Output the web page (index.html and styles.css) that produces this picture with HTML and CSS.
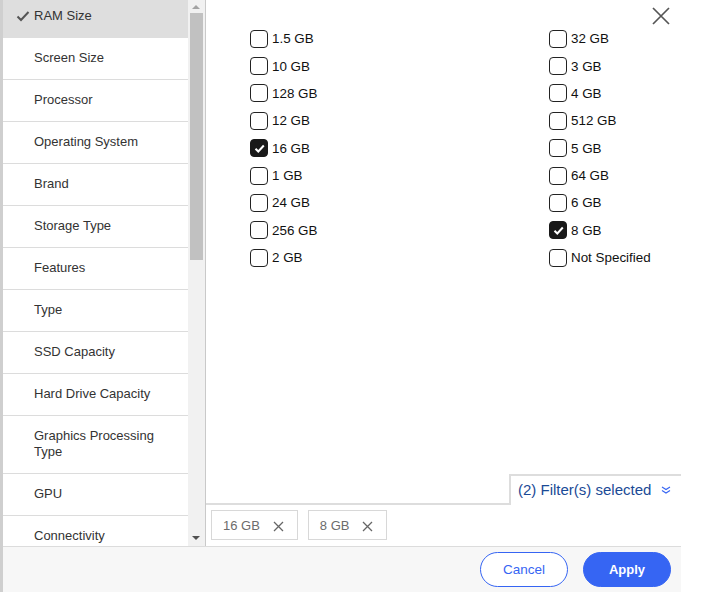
FILE: index.html
```html
<!DOCTYPE html>
<html lang="en">
<head>
<meta charset="utf-8">
<title>Filters</title>
<link rel="stylesheet" href="styles.css">
</head>
<body>
<div class="page">
  <div class="backdrop"></div>
  <div class="modal">
    <div class="main">
      <div class="sidebar">
        <div class="list-wrap">
          <ul class="list">
            <li class="row selected"><span class="icon"><svg width="14" height="14" viewBox="0 0 14 14"><path d="M1.5 7.5 L5 11 L12.5 3" fill="none" stroke="#555" stroke-width="2"/></svg></span><span class="label">RAM Size</span></li>
            <li class="row"><span class="icon"></span><span class="label">Screen Size</span></li>
            <li class="row"><span class="icon"></span><span class="label">Processor</span></li>
            <li class="row"><span class="icon"></span><span class="label">Operating System</span></li>
            <li class="row"><span class="icon"></span><span class="label">Brand</span></li>
            <li class="row"><span class="icon"></span><span class="label">Storage Type</span></li>
            <li class="row"><span class="icon"></span><span class="label">Features</span></li>
            <li class="row"><span class="icon"></span><span class="label">Type</span></li>
            <li class="row"><span class="icon"></span><span class="label">SSD Capacity</span></li>
            <li class="row"><span class="icon"></span><span class="label">Hard Drive Capacity</span></li>
            <li class="row"><span class="icon"></span><span class="label">Graphics Processing Type</span></li>
            <li class="row"><span class="icon"></span><span class="label">GPU</span></li>
            <li class="row"><span class="icon"></span><span class="label">Connectivity</span></li>
          </ul>
        </div>
        <div class="scrollbar">
          <div class="sb-btn"><span class="tri-up"></span></div>
          <div class="sb-thumb"></div>
          <div class="sb-space"></div>
          <div class="sb-btn sb-down"><span class="tri-down"></span></div>
        </div>
      </div>
      <div class="pane">
        <div class="options">
          <button class="close" aria-label="Close"><svg width="20" height="20" viewBox="0 0 20 20"><path d="M2 2 L18 18 M18 2 L2 18" stroke="#555" stroke-width="1.7" fill="none"/></svg></button>
          <div class="grid">
            <label class="opt"><span class="box"></span>1.5 GB</label>
            <label class="opt"><span class="box"></span>10 GB</label>
            <label class="opt"><span class="box"></span>128 GB</label>
            <label class="opt"><span class="box"></span>12 GB</label>
            <label class="opt"><span class="box checked"><svg width="13" height="13" viewBox="0 0 13 13"><path d="M2.5 6.8 L5.3 9.5 L10.8 3.5" fill="none" stroke="#fff" stroke-width="2"/></svg></span>16 GB</label>
            <label class="opt"><span class="box"></span>1 GB</label>
            <label class="opt"><span class="box"></span>24 GB</label>
            <label class="opt"><span class="box"></span>256 GB</label>
            <label class="opt"><span class="box"></span>2 GB</label>
            <label class="opt"><span class="box"></span>32 GB</label>
            <label class="opt"><span class="box"></span>3 GB</label>
            <label class="opt"><span class="box"></span>4 GB</label>
            <label class="opt"><span class="box"></span>512 GB</label>
            <label class="opt"><span class="box"></span>5 GB</label>
            <label class="opt"><span class="box"></span>64 GB</label>
            <label class="opt"><span class="box"></span>6 GB</label>
            <label class="opt"><span class="box checked"><svg width="13" height="13" viewBox="0 0 13 13"><path d="M2.5 6.8 L5.3 9.5 L10.8 3.5" fill="none" stroke="#fff" stroke-width="2"/></svg></span>8 GB</label>
            <label class="opt"><span class="box"></span>Not Specified</label>
          </div>
        </div>
        <div class="selbar">
          <div class="selbar-fill"></div>
          <div class="seltab">(2) Filter(s) selected <svg class="chev" width="10" height="8" viewBox="0 0 10 8"><path d="M1 1 L5 3.5 L9 1 M1 4.5 L5 7 L9 4.5" fill="none" stroke="#3665f3" stroke-width="1.1"/></svg></div>
        </div>
        <div class="chips">
          <span class="chip">16 GB <svg width="11" height="11" viewBox="0 0 11 11"><path d="M1 1 L10 10 M10 1 L1 10" stroke="#666" stroke-width="1.3"/></svg></span>
          <span class="chip">8 GB <svg width="11" height="11" viewBox="0 0 11 11"><path d="M1 1 L10 10 M10 1 L1 10" stroke="#666" stroke-width="1.3"/></svg></span>
        </div>
      </div>
    </div>
    <div class="footer">
      <button class="btn btn-cancel">Cancel</button>
      <button class="btn btn-apply">Apply</button>
    </div>
  </div>
</div>
</body>
</html>
```

FILE: styles.css
```css
* { box-sizing: border-box; }
html, body { margin: 0; padding: 0; background: #fff; }
body { font-family: "Liberation Sans", Arial, sans-serif; }

.page { display: flex; height: 592px; overflow: hidden; }
.backdrop { width: 3px; flex-shrink: 0; background: #cfcfcf; }
.modal { width: 678px; flex-shrink: 0; display: flex; flex-direction: column; background: #fff; }

.main { display: flex; height: 546px; }

.sidebar { display: flex; width: 203px; flex-shrink: 0; border-right: 1px solid #c9c9c9; }
.list-wrap { width: 185px; height: 546px; overflow: hidden; }
.list { list-style: none; margin: -4px 0 0 0; padding: 0; }
.row { display: flex; align-items: flex-start; padding: 12px 20px 13px 10px; border-bottom: 1px solid #dcdcdc; font-size: 13px; line-height: 16px; color: #333; }
.row.selected { background: #dedede; border-bottom-color: #dedede; }
.icon { width: 21px; flex-shrink: 0; height: 16px; display: flex; align-items: center; padding-left: 3px; }
.label { flex: 1; }

.scrollbar { width: 17px; flex-shrink: 0; background: #f1f1f1; display: flex; flex-direction: column; }
.sb-btn { height: 13px; display: flex; align-items: center; justify-content: center; }
.sb-down { height: 17px; }
.tri-up { width: 0; height: 0; border-left: 4px solid transparent; border-right: 4px solid transparent; border-bottom: 4px solid #a3a3a3; margin-left: -1px; }
.tri-down { width: 0; height: 0; border-left: 4px solid transparent; border-right: 4px solid transparent; border-top: 4px solid #505050; margin-left: -1px; }
.sb-thumb { height: 247px; margin: 0 2px 0 2px; background: #c1c1c1; }
.sb-space { flex: 1; }

.pane { flex: 1; display: flex; flex-direction: column; }
.options { position: relative; flex: 1; padding: 25px 0 0 44px; }
.close { position: absolute; top: 6px; right: 10px; width: 20px; height: 20px; padding: 0; border: 0; background: none; }
.grid { display: grid; grid-template-columns: 299px 1fr; grid-template-rows: repeat(9, 27.375px); grid-auto-flow: column; }
.opt { display: flex; align-items: center; font-size: 13.4px; color: #111; }
.box { width: 18px; height: 18px; border: 1.4px solid #222; border-radius: 4px; margin-right: 4px; display: flex; align-items: center; justify-content: center; background: #fff; flex-shrink: 0; }
.box.checked { background: #191919; border-color: #191919; }

.selbar { display: flex; height: 31px; }
.selbar-fill { width: 303px; border-bottom: 2px solid #ddd; }
.seltab { flex: 1; border-top: 2px solid #ddd; border-left: 2px solid #ddd; padding: 0 0 3px 7px; display: flex; align-items: center; font-size: 15px; color: #1a4a96; }
.chev { margin-left: 10px; margin-top: 1px; }

.chips { height: 41px; padding: 5px 0 0 5px; display: flex; gap: 10px; align-items: flex-start; }
.chip { height: 30px; border: 1px solid #d8d8d8; display: flex; align-items: center; gap: 13px; padding: 0 13px 0 11px; font-size: 13px; color: #6c6c6c; }
.chip svg { margin-top: 3px; }

.footer { height: 46px; border-top: 1px solid #dcdcdc; background: #f7f7f7; display: flex; justify-content: flex-end; align-items: flex-start; padding: 5px 10px 0 0; gap: 15px; }
.btn { width: 88px; height: 35px; border-radius: 18px; font-family: "Liberation Sans", Arial, sans-serif; font-size: 13.5px; padding: 0; }
.btn-cancel { background: #fff; border: 1px solid #3665f3; color: #3665f3; }
.btn-apply { background: #3665f3; border: 1px solid #3665f3; color: #fff; font-weight: bold; font-size: 13px; }
```
